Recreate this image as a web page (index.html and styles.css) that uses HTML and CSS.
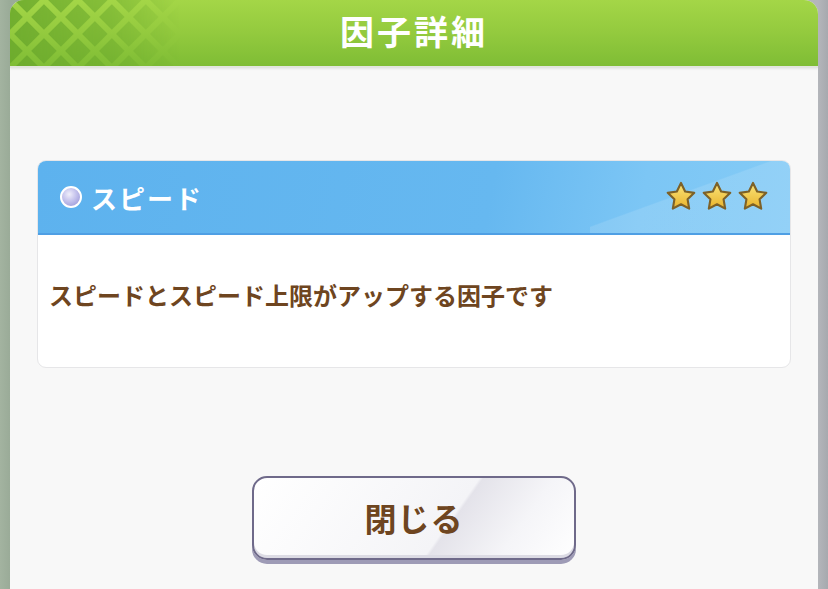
FILE: index.html
```html
<!DOCTYPE html>
<html lang="ja">
  <head>
    <meta charset="UTF-8" />
    <title>因子詳細</title>
    <link rel="stylesheet" href="styles.css">
  </head>
  <body>
    <div class="modal">
      <div class="header">
        <svg class="pattern" width="200" height="66" viewBox="0 0 200 66">
          <defs>
            <pattern id="dia" width="24" height="24" patternUnits="userSpaceOnUse" patternTransform="rotate(45)">
              <rect x="3" y="3" width="18" height="18" fill="#6aa82c" />
            </pattern>
            <linearGradient id="fade" x1="0" y1="0" x2="1" y2="0">
              <stop offset="0" stop-color="#fff" stop-opacity="0.85" />
              <stop offset="0.5" stop-color="#fff" stop-opacity="0.5" />
              <stop offset="0.85" stop-color="#fff" stop-opacity="0" />
            </linearGradient>
            <mask id="m">
              <rect width="200" height="66" fill="url(#fade)" />
            </mask>
          </defs>
          <rect width="200" height="66" fill="url(#dia)" mask="url(#m)" />
        </svg>
        <h1>因子詳細</h1>
      </div>

      <div class="content">
        <div class="card">
          <div class="card-head">
            <span class="orb"></span>
            <span class="name">スピード</span>
            <div class="stars">
              <svg viewBox="0 0 32 32" class="star"><defs><linearGradient id="sg" x1="0" y1="0" x2="0" y2="1"><stop offset="0" stop-color="#fbe57a" /><stop offset="1" stop-color="#e8b32c" /></linearGradient></defs><path d="M16 2.8l3.9 8 8.6 1.3-6.3 6.1 1.5 8.7L16 22.8l-7.7 4.1 1.5-8.7-6.3-6.1 8.6-1.3z" /></svg>
              <svg viewBox="0 0 32 32" class="star"><path d="M16 2.8l3.9 8 8.6 1.3-6.3 6.1 1.5 8.7L16 22.8l-7.7 4.1 1.5-8.7-6.3-6.1 8.6-1.3z" /></svg>
              <svg viewBox="0 0 32 32" class="star"><path d="M16 2.8l3.9 8 8.6 1.3-6.3 6.1 1.5 8.7L16 22.8l-7.7 4.1 1.5-8.7-6.3-6.1 8.6-1.3z" /></svg>
            </div>
          </div>
          <div class="card-body">
            <p>スピードとスピード上限がアップする因子です</p>
          </div>
        </div>

        <button class="close">閉じる</button>
      </div>
    </div>
  </body>
</html>
```

FILE: styles.css
```css
html, body {
  margin: 0;
  height: 589px;
  overflow: hidden;
}
body {
  background: linear-gradient(90deg, #a3b3a0 0, #9aab98 10px, #b4b6bb 818px, #a6a9ae 828px);
  font-family: "Noto Sans CJK JP", "Noto Sans", sans-serif;
  padding: 0 10px;
}
.modal {
  height: 589px;
  background-color: #f8f8f8;
  border-radius: 14px 14px 0 0;
  overflow: hidden;
  display: flex;
  flex-direction: column;
}
.header {
  position: relative;
  height: 66px;
  background: linear-gradient(180deg, #a4d647 0%, #93ca3e 50%, #7fbd35 100%);
  border-bottom: 2px solid #e2e5de;
  box-shadow: 0 1px 2px rgba(0, 0, 0, 0.08);
  display: flex;
  align-items: center;
  justify-content: center;
}
.pattern {
  position: absolute;
  left: 0;
  top: 0;
}
.header h1 {
  position: relative;
  margin: 0;
  color: #fff;
  font-size: 34px;
  font-weight: 700;
  letter-spacing: 3px;
  line-height: 1;
  padding-bottom: 4px;
}
.content {
  padding: 92px 28px 0;
  display: flex;
  flex-direction: column;
  align-items: center;
}
.card {
  width: 752px;
  background-color: #fff;
  border-radius: 9px;
  border: 1px solid #e6e6e8;
  overflow: hidden;
}
.card-head {
  height: 72px;
  background: linear-gradient(100deg, #5db2ee 0%, #66b8f0 60%, #7cc6f5 80%, #84cbf6 100%);
  border-bottom: 2px solid #4f9fe4;
  display: flex;
  align-items: center;
  padding: 0 20px 0 22px;
  position: relative;
}
.card-head::after {
  content: "";
  position: absolute;
  right: 0;
  top: 0;
  width: 200px;
  height: 72px;
  background: linear-gradient(160deg, transparent 45%, rgba(255, 255, 255, 0.12) 46%);
}
.orb {
  width: 18px;
  height: 18px;
  border-radius: 50%;
  border: 2px solid #fff;
  background: radial-gradient(circle at 40% 35%, #f0effb 0, #c3c1ec 45%, #8f8dd2 100%);
  margin-right: 9px;
}
.name {
  color: #fff;
  font-size: 26px;
  font-weight: 700;
  letter-spacing: 2px;
}
.stars {
  margin-left: auto;
  display: flex;
  gap: 2px;
  position: relative;
  z-index: 1;
}
.star {
  width: 34px;
  height: 34px;
}
.star path {
  fill: url(#sg);
  stroke: #7d6128;
  stroke-width: 2;
  stroke-linejoin: round;
}
.card-body {
  height: 132px;
  display: flex;
  align-items: center;
  padding: 0 11px;
}
.card-body p {
  margin: 0;
  color: #6e4520;
  font-size: 24px;
  font-weight: 700;
  padding-bottom: 14px;
}
.close {
  margin-top: 108px;
  width: 324px;
  height: 84px;
  border: 2px solid #6f6a8a;
  border-radius: 15px;
  background: linear-gradient(125deg, #ffffff 0%, #f4f4f7 60%, #e4e3ea 61%, #f5f5f8 80%, #ffffff 100%);
  box-shadow: 0 4px 0 #9e9bb6, inset 0 -3px 0 #dcdbe4;
  color: #6e4520;
  font-family: "Noto Sans CJK JP", "Noto Sans", sans-serif;
  font-size: 32px;
  font-weight: 700;
  letter-spacing: 1px;
  padding-bottom: 4px;
  cursor: pointer;
}
```
